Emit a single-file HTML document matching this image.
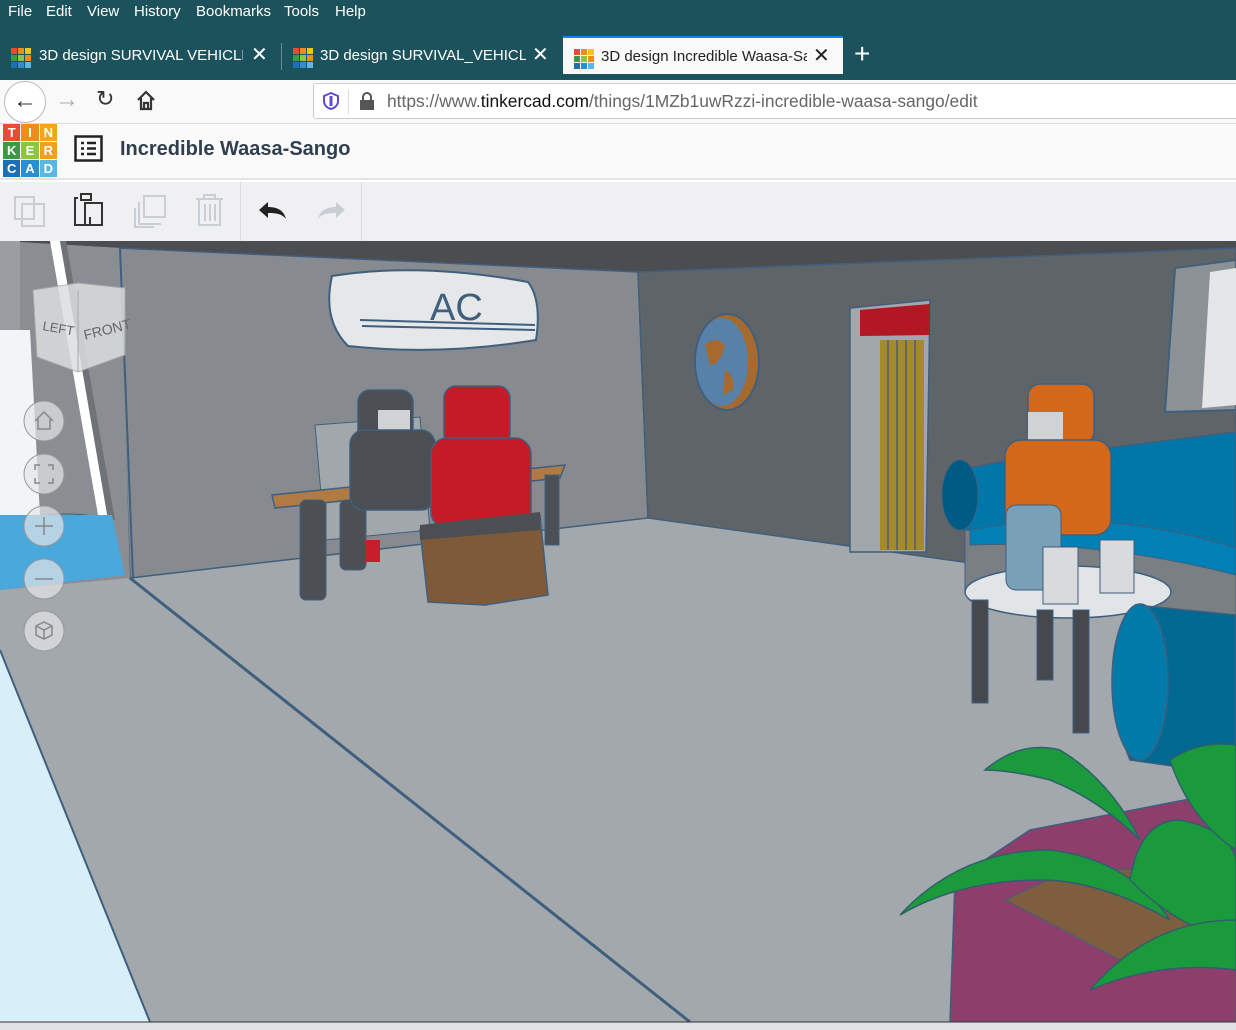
<!DOCTYPE html>
<html><head><meta charset="utf-8"><style>
*{margin:0;padding:0;box-sizing:border-box}
body{width:1236px;height:1030px;overflow:hidden;font-family:"Liberation Sans",sans-serif;background:#fff;position:relative}
.menu{position:absolute;top:0;left:0;width:1236px;height:80px;background:#1c525c;color:#fff}
.menu span{position:absolute;top:3px;font-size:15px}
.tab{position:absolute;top:37px;height:37px;color:#fff;font-size:15px;line-height:37px}
.tt{position:absolute;left:38px;width:206px;overflow:hidden;white-space:nowrap}
.fav{position:absolute;top:11px;width:20px;height:20px;display:grid;grid-template-columns:repeat(3,1fr);gap:1px}
.fav i{display:block}
.nav{position:absolute;top:80px;left:0;width:1236px;height:44px;background:#f9f9fa;border-bottom:1px solid #ddd}
.url{position:absolute;left:313px;top:3px;width:930px;height:36px;background:#fff;border:1px solid #ccc;border-radius:3px;font-size:17.4px;color:#666;line-height:34px}
.hdr{position:absolute;top:124px;left:0;width:1236px;height:56px;background:#fafafa;border-bottom:2px solid #e4e4e4}
.logo{position:absolute;left:3px;top:124px;width:54px;height:53px;display:grid;grid-template-columns:repeat(3,1fr);gap:1px}
.logo b{color:#fff;font-size:13px;text-align:center;line-height:17px}
.tool{position:absolute;top:182px;left:0;width:1236px;height:59px;background:#f0f0f2}
</style></head><body>
<div class="menu">
<span style="left:8px">File</span><span style="left:46px">Edit</span><span style="left:87px">View</span><span style="left:134px">History</span><span style="left:196px">Bookmarks</span><span style="left:284px">Tools</span><span style="left:335px">Help</span>
</div>
<div class="tab" style="left:0;width:280px"><div class="fav" style="left:11px"><i style="background:#e94b35"></i><i style="background:#f08c1a"></i><i style="background:#f3c516"></i><i style="background:#3b9b3e"></i><i style="background:#8cc63f"></i><i style="background:#f08c1a"></i><i style="background:#1a6fb5"></i><i style="background:#2a8fd0"></i><i style="background:#5bb6e0"></i></div><span class="tt" style="left:39px;width:204px">3D design SURVIVAL VEHICLE A</span><span style="position:absolute;left:251px;font-size:20px">✕</span></div>
<div style="position:absolute;left:281px;top:43px;width:1px;height:27px;background:#6a8c93"></div>
<div class="tab" style="left:282px;width:280px"><div class="fav" style="left:11px"><i style="background:#e94b35"></i><i style="background:#f08c1a"></i><i style="background:#f3c516"></i><i style="background:#3b9b3e"></i><i style="background:#8cc63f"></i><i style="background:#f08c1a"></i><i style="background:#1a6fb5"></i><i style="background:#2a8fd0"></i><i style="background:#5bb6e0"></i></div><span class="tt">3D design SURVIVAL_VEHICLE_</span><span style="position:absolute;left:250px;font-size:20px">✕</span></div>
<div class="tab" style="left:563px;width:280px;background:#f9f9fa;color:#222;border-top:2px solid #0a84ff;height:38px;top:36px"><div class="fav" style="left:11px"><i style="background:#e94b35"></i><i style="background:#f08c1a"></i><i style="background:#f3c516"></i><i style="background:#3b9b3e"></i><i style="background:#8cc63f"></i><i style="background:#f08c1a"></i><i style="background:#1a6fb5"></i><i style="background:#2a8fd0"></i><i style="background:#5bb6e0"></i></div><span class="tt">3D design Incredible Waasa-Sa</span><span style="position:absolute;left:250px;font-size:20px">✕</span></div>
<div style="position:absolute;left:854px;top:38px;color:#fff;font-size:28px;font-weight:300">+</div>
<div class="nav">
<div style="position:absolute;left:4px;top:1px;width:42px;height:42px;border:1px solid #bbb;border-radius:50%;background:#fff;font-size:24px;text-align:center;line-height:38px;color:#333">←</div>
<div style="position:absolute;left:55px;top:6px;font-size:24px;color:#aaa">→</div>
<div style="position:absolute;left:96px;top:6px;font-size:22px;color:#333">↻</div>
<svg style="position:absolute;left:136px;top:10px" width="20" height="22"><path d="M2 10 L10 2 L18 10 M5 8 V19 H15 V8 M8 19 V13 H12 V19" stroke="#333" stroke-width="2.2" fill="none"/></svg>
<div class="url"><svg style="position:absolute;left:9px;top:8px" width="16" height="18"><path d="M8 1 L15 4 V9 C15 13 12 16 8 17 C4 16 1 13 1 9 V4 Z" fill="none" stroke="#5b4bd6" stroke-width="2"/><path d="M8 4 V14" stroke="#5b4bd6" stroke-width="3"/></svg><div style="position:absolute;left:34px;top:6px;width:1px;height:24px;background:#ddd"></div><svg style="position:absolute;left:45px;top:8px" width="16" height="18"><rect x="1" y="8" width="14" height="10" fill="#555"/><path d="M4 8 V5 a4 4 0 0 1 8 0 V8" stroke="#555" stroke-width="2" fill="none"/></svg><span style="position:absolute;left:73px">https://www.<span style="color:#111">tinkercad.com</span>/things/1MZb1uwRzzi-incredible-waasa-sango/edit</span></div>
</div>
<div class="hdr"></div>
<div class="logo">
<b style="background:#e94b35">T</b><b style="background:#f08c1a">I</b><b style="background:#f3a516">N</b><b style="background:#3b9b3e">K</b><b style="background:#8cc63f">E</b><b style="background:#f0a01a">R</b><b style="background:#1a6fb5">C</b><b style="background:#2a8fd0">A</b><b style="background:#5bb6e0">D</b>
</div>
<svg style="position:absolute;left:74px;top:135px" width="29" height="27"><rect x="1.5" y="1.5" width="26" height="24" fill="none" stroke="#222" stroke-width="2.5"/><path d="M7 8h3M7 13.5h3M7 19h3M13 8h9M13 13.5h9M13 19h9" stroke="#222" stroke-width="2.5"/></svg>
<div style="position:absolute;left:120px;top:138px;font-size:20px;font-weight:bold;color:#2f3f4f">Incredible Waasa-Sango</div>
<div class="tool">
<div style="position:absolute;left:240px;top:0;width:1px;height:59px;background:#ddd"></div>
<div style="position:absolute;left:361px;top:0;width:1px;height:59px;background:#ddd"></div>
<svg width="360" height="59" style="position:absolute;left:0;top:0">
<g fill="none" stroke="#c8ced4" stroke-width="2"><rect x="15" y="15" width="19" height="22"/><rect x="22" y="22" width="22" height="22"/></g>
<g fill="none" stroke="#333" stroke-width="2"><path d="M78 16h-3v27h15v-8"/><rect x="85" y="21" width="17" height="22"/><rect x="81" y="12" width="10" height="6"/></g>
<g fill="none" stroke="#c8ced4" stroke-width="2"><rect x="144" y="14" width="21" height="21"/><path d="M139 20v22h22"/><path d="M135 26v19h19"/></g>
<g fill="none" stroke="#c8ced4" stroke-width="2"><path d="M196 17h27M204 17v-4h11v4M199 17v26h21v-26M205 22v17M210 22v17M215 22v17"/></g>
<path d="M259 28 l9 -8 v5 c10 0 16 4 18 12 c-4 -5 -9 -6 -18 -6 v5 z" fill="#222"/>
<path d="M345 28 l-9 -8 v5 c-10 0 -16 4 -18 12 c4 -5 9 -6 18 -6 v5 z" fill="#c8ced4"/>
</svg>
</div>
<svg style="position:absolute;left:0;top:241px" width="1236" height="789" viewBox="0 241 1236 789">
<rect x="0" y="241" width="1236" height="789" fill="#a3a8ac"/>
<!-- ceiling -->
<polygon points="0,241 1236,241 1236,248 638,272 120,248" fill="#4b4d50"/>
<!-- back wall -->
<polygon points="118,248 638,272 648,518 130,578" fill="#878b8f" stroke="#3f5f7f" stroke-width="1.5"/>
<!-- right wall -->
<polygon points="638,272 1236,248 1236,600 648,518" fill="#5f6468" stroke="#3f5f7f" stroke-width="1.5"/>
<!-- left side pillar region -->
<polygon points="0,241 120,248 130,578 0,590" fill="#8a8e92"/>
<polygon points="0,330 30,330 40,515 0,515" fill="#f2f4f5"/>
<polygon points="0,241 20,241 20,330 0,330" fill="#9a9ea2"/>
<polygon points="50,241 60,241 108,515 98,515" fill="#fff"/>
<polygon points="60,241 66,241 115,520 108,520" fill="#6f7377"/>
<ellipse cx="65" cy="520" rx="38" ry="6" fill="#8a8e92" stroke="#3f5f7f"/>
<polygon points="0,515 112,515 125,575 0,590" fill="#4aa8dc"/>
<polygon points="0,650 150,1022 0,1022" fill="#d8eef8"/>
<line x1="130" y1="578" x2="690" y2="1022" stroke="#3f5f7f" stroke-width="3"/>
<line x1="0" y1="650" x2="150" y2="1022" stroke="#3f5f7f" stroke-width="2"/>
<line x1="120" y1="248" x2="133" y2="578" stroke="#3f5f7f" stroke-width="2"/>
<!-- view cube -->
<polygon points="33,290 78,283 125,288 125,355 78,372 37,357" fill="#dcdedf" opacity="0.85" stroke="#aaa"/>
<line x1="78" y1="290" x2="78" y2="372" stroke="#aaa"/>
<text x="42" y="330" font-size="13" fill="#666" transform="rotate(10 42 330)">LEFT</text>
<text x="85" y="340" font-size="14" fill="#666" transform="rotate(-14 85 340)">FRONT</text>
<!-- nav buttons -->
<g fill="#e4e6e8" fill-opacity="0.7" stroke="#999">
<circle cx="44" cy="421" r="20"/><circle cx="44" cy="474" r="20"/><circle cx="44" cy="526" r="20"/><circle cx="44" cy="579" r="20"/><circle cx="44" cy="631" r="20"/></g>
<g stroke="#888" fill="none" stroke-width="1.5"><path d="M35 421 l9 -9 l9 9 M38 419 v10 h12 v-10"/><path d="M35 470v-5h5 M48 465h5v5 M53 478v5h-5 M40 483h-5v-5"/><path d="M44 517v18M35 526h18"/><path d="M35 579h18"/><path d="M44 622 l8 4 v9 l-8 4 l-8 -4 v-9z M36 626 l8 4 l8 -4 M44 630 v9"/></g>
<!-- AC -->
<path d="M332 276 Q420 262 528 282 Q542 300 536 340 Q440 356 348 346 Q322 320 332 276Z" fill="#e6e7e8" stroke="#3f5f7f" stroke-width="2"/>
<text x="430" y="320" font-size="38" fill="#3f5f7f" font-family="Liberation Sans">AC</text>
<path d="M360 320 L535 325 M362 326 L535 330" stroke="#3f5f7f" stroke-width="2"/>
<!-- desk -->
<polygon points="315,425 420,417 430,530 325,540" fill="#a2a7ac" stroke="#3f5f7f"/>
<polygon points="272,495 565,465 560,478 275,508" fill="#b07a45" stroke="#3f5f7f" stroke-width="1.5"/>
<rect x="300" y="500" width="26" height="100" rx="6" fill="#4c5054" stroke="#3f5f7f"/>
<rect x="340" y="500" width="26" height="70" rx="6" fill="#4c5054" stroke="#3f5f7f"/>
<rect x="545" y="475" width="14" height="70" fill="#4c5054" stroke="#3f5f7f"/>
<rect x="365" y="540" width="15" height="22" fill="#c81e2a"/>
<!-- gray chair -->
<rect x="358" y="390" width="55" height="55" rx="12" fill="#4b4f53" stroke="#3f5f7f" stroke-width="1.5"/>
<rect x="378" y="410" width="32" height="28" fill="#d0d2d4"/>
<rect x="350" y="430" width="85" height="80" rx="14" fill="#4b4f53" stroke="#3f5f7f" stroke-width="1.5"/>
<!-- red chair -->
<rect x="444" y="386" width="66" height="60" rx="12" fill="#c41b26" stroke="#3f5f7f" stroke-width="1.5"/>
<rect x="431" y="438" width="100" height="90" rx="16" fill="#c41b26" stroke="#3f5f7f" stroke-width="1.5"/>
<polygon points="420,530 480,522 540,515 548,595 485,605 428,602" fill="#7f5a38" stroke="#3f5f7f" stroke-width="1.5"/>
<polygon points="420,525 540,512 540,530 420,540" fill="#4b4f53"/>
<!-- clock -->
<ellipse cx="727" cy="362" rx="32" ry="48" fill="#a66a2e" stroke="#3f5f7f" stroke-width="2"/>
<ellipse cx="722" cy="362" rx="26" ry="44" fill="#5781a8"/>
<path d="M705 345 q10 -10 20 0 q-5 20 -15 20z M725 370 q10 5 8 20 l-10 5z" fill="#a66a2e"/>
<!-- door -->
<polygon points="850,308 930,300 926,552 850,552" fill="#a2a7ac" stroke="#3f5f7f" stroke-width="1.5"/>
<polygon points="860,310 930,304 930,335 860,336" fill="#b21724"/>
<rect x="880" y="340" width="44" height="210" fill="#a58a2c"/>
<path d="M888 340v210M897 340v210M906 340v210M915 340v210" stroke="#666" stroke-width="2"/>
<!-- window -->
<polygon points="1175,268 1236,260 1236,410 1165,412" fill="#8c9196" stroke="#3f5f7f" stroke-width="2"/>
<polygon points="1210,272 1236,268 1236,405 1202,408" fill="#e4e6e8"/>
<!-- sofa -->
<polygon points="960,470 1010,460 1236,432 1236,560 1090,545 965,530" fill="#0077a8" stroke="#3f5f7f" stroke-width="1.5"/>
<ellipse cx="960" cy="495" rx="18" ry="35" fill="#005b84" stroke="#3f5f7f"/>
<polygon points="965,530 1236,550 1236,620 965,590" fill="#7a7f84" stroke="#3f5f7f"/>
<path d="M970 530 Q1100 505 1236 548 L1236 575 Q1100 540 970 545Z" fill="#0080b5" stroke="#3f5f7f"/>
<!-- orange chair -->
<rect x="1028" y="384" width="66" height="60" rx="12" fill="#d4681a" stroke="#3f5f7f" stroke-width="1.5"/>
<rect x="1028" y="412" width="35" height="32" fill="#d0d2d4"/>
<rect x="1005" y="440" width="106" height="95" rx="16" fill="#d4681a" stroke="#3f5f7f" stroke-width="1.5"/>
<!-- table -->
<ellipse cx="1068" cy="592" rx="103" ry="26" fill="#e2e5e8" stroke="#3f5f7f" stroke-width="1.5"/>
<rect x="972" y="600" width="16" height="103" fill="#45494d" stroke="#3f5f7f"/>
<rect x="1037" y="610" width="16" height="70" fill="#45494d" stroke="#3f5f7f"/>
<rect x="1073" y="610" width="16" height="123" fill="#45494d" stroke="#3f5f7f"/>
<rect x="1006" y="505" width="55" height="85" rx="10" fill="#7aa0b8" stroke="#3f5f7f"/>
<rect x="1043" y="547" width="35" height="57" fill="#d8dadc" stroke="#3f5f7f"/>
<rect x="1100" y="540" width="34" height="53" fill="#d8dadc" stroke="#3f5f7f"/>
<!-- sofa arm front -->
<path d="M1135 605 L1236 615 L1236 775 L1130 760 Q1100 690 1135 605Z" fill="#006891" stroke="#3f5f7f" stroke-width="1.5"/>
<ellipse cx="1140" cy="682" rx="28" ry="78" fill="#007aa8" stroke="#3f5f7f" stroke-width="1.5"/>
<!-- plant pot -->
<polygon points="955,880 1030,830 1236,790 1236,1022 950,1022" fill="#8e3e6a" stroke="#3f5f7f" stroke-width="1.5"/>
<polygon points="1005,900 1080,865 1236,880 1236,970 1120,960" fill="#7f5d3f" stroke="#3f5f7f"/>
<!-- leaves -->
<g fill="#1b9a3c" stroke="#2f5f6f" stroke-width="1.5">
<path d="M985 770 Q1020 740 1060 750 Q1110 780 1140 840 Q1100 800 1050 780 Q1010 770 985 770Z"/>
<path d="M900 915 Q960 850 1050 850 Q1130 860 1170 920 Q1100 880 1040 880 Q960 880 900 915Z"/>
<path d="M1130 880 Q1140 820 1180 820 Q1230 830 1236 860 L1236 940 Q1180 930 1130 880Z"/>
<path d="M1170 760 Q1200 740 1236 745 L1236 850 Q1190 820 1170 760Z"/>
<path d="M1090 990 Q1150 920 1236 920 L1236 970 Q1160 960 1090 990Z"/>
</g>
<rect x="0" y="1022" width="1236" height="8" fill="#dfe1e3"/>
<line x1="0" y1="1022" x2="1236" y2="1022" stroke="#333" stroke-width="1"/>
</svg>
</body></html>
